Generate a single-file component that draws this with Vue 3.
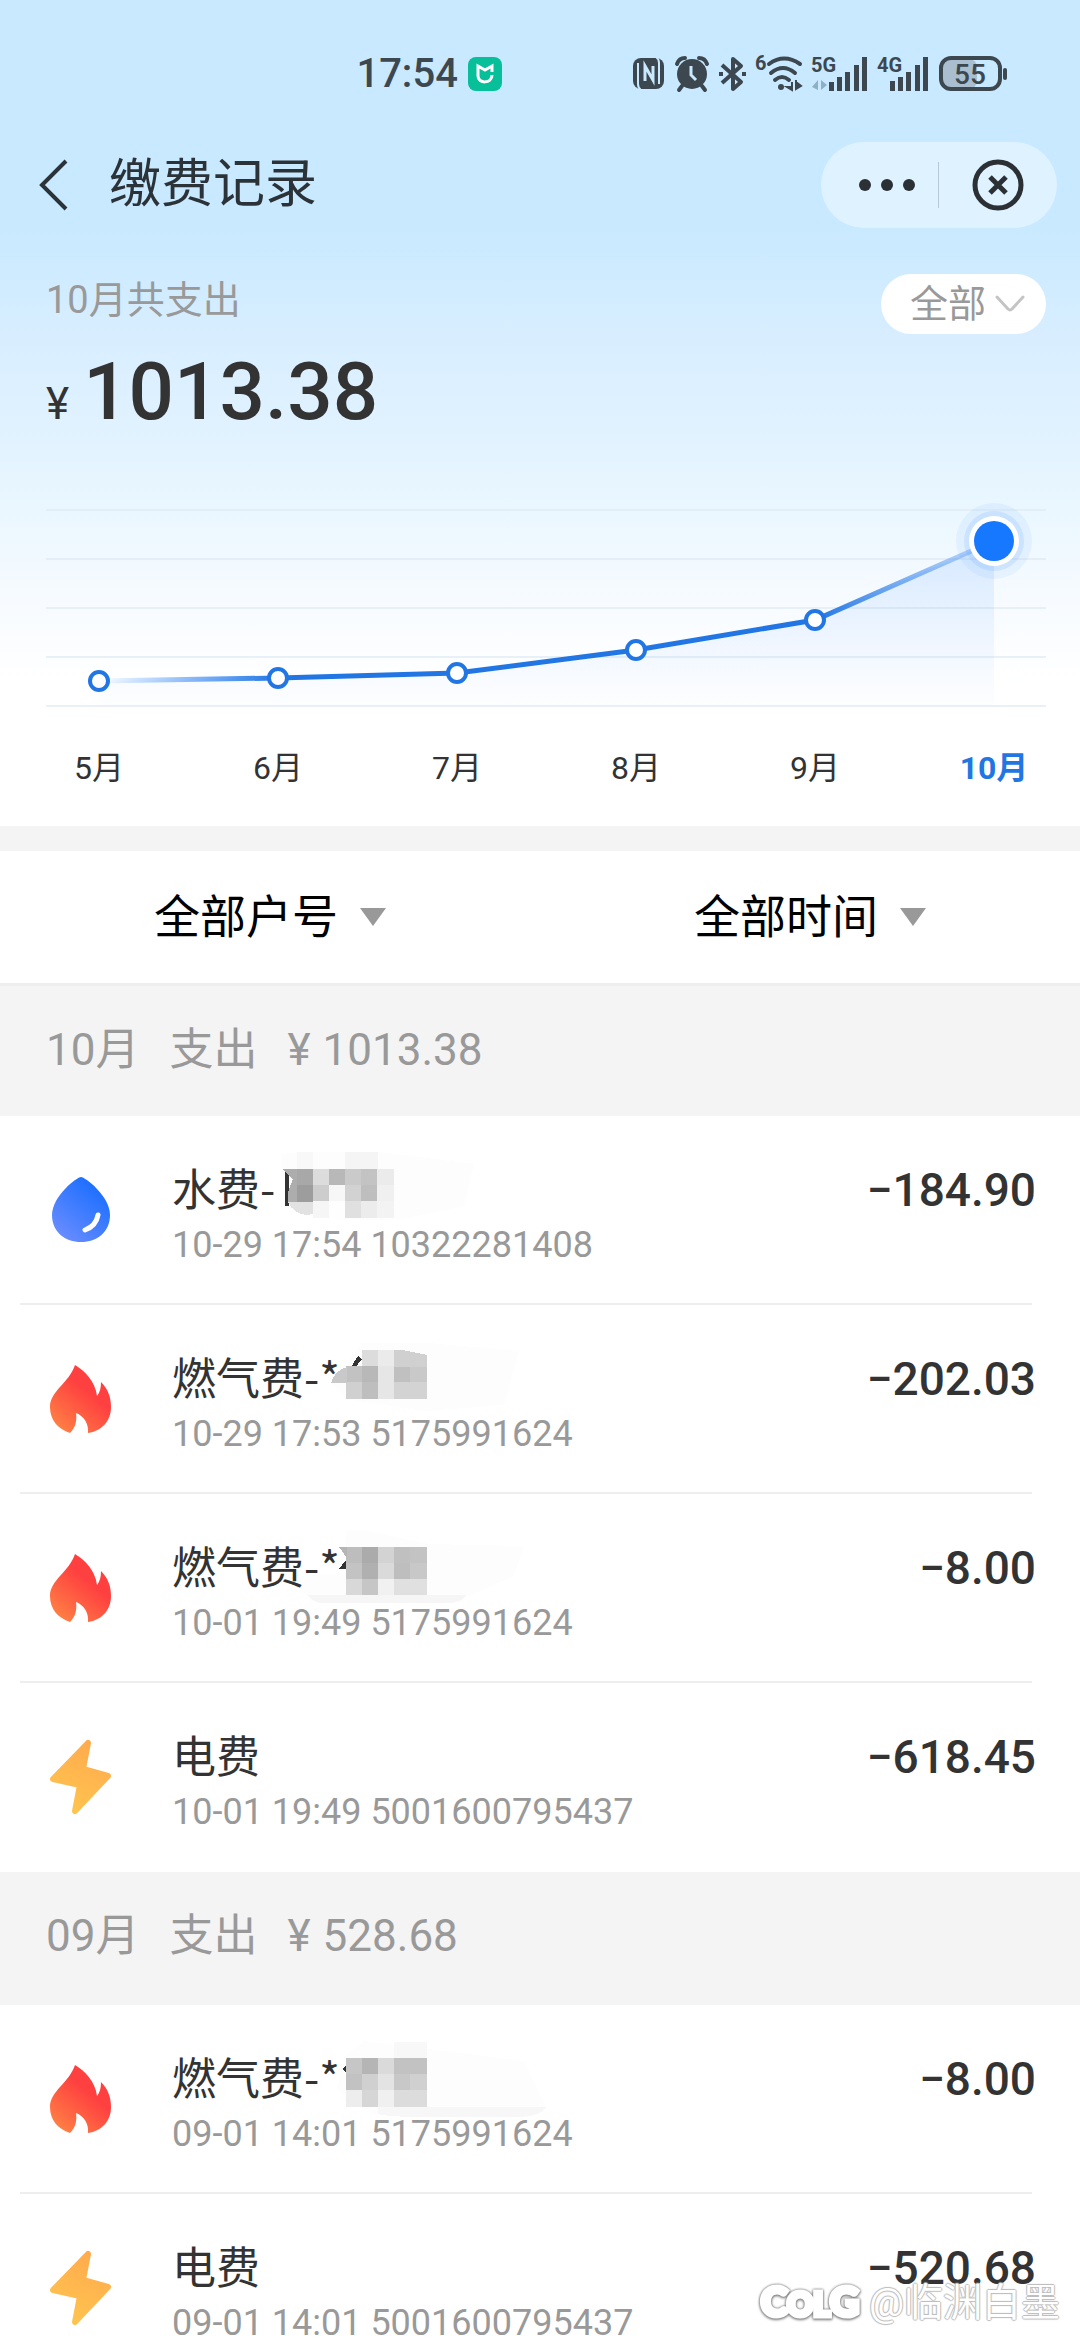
<script setup>
const points = [
  { label: '5月', x: 99, y: 201 },
  { label: '6月', x: 278, y: 198 },
  { label: '7月', x: 457, y: 193 },
  { label: '8月', x: 636, y: 170 },
  { label: '9月', x: 815, y: 140 },
  { label: '10月', x: 994, y: 61 }
]
const gridLines = [30, 79, 128, 177, 226]
const line = points.map((p) => `${p.x},${p.y}`).join(' ')
const area = `${line} 994,226 99,226`

// Each strip of a mask: top, left and the shades of its square cells.
const masks = {
  water: {
    back: 'M107 38L125 36H205L300 48L290 90L225 104H172L130 98L108 60Z',
    glyph: 'M111 54h4v36h-4z',
    strips: [
      { y: 36, x: 123, c: ['#f8f8f8', '#fdfdfd', '#fdfdfd', '#f5f5f5', '#f5f5f5'] },
      { y: 53, x: 123, c: ['#a8a8a8', '#dcdcdc', '#b8b8b8', '#cacaca', '#c3c3c3', '#ebebeb'] },
      { y: 69, x: 123, c: ['#9d9d9d', '#cdcdcd', '#f7f7f7', '#d2d2d2', '#bebebe', '#f0f0f0'] },
      { y: 85, x: 139, c: ['#f6f6f6', '#fefefe', '#e0e0e0', '#ececec', '#f3f3f3'] }
    ],
    edges: [
      { d: 'M108 53H123V86H114V76L119 63Z', f: '#adadad' },
      { d: 'M114 86H139V98Q122 102 114 86Z', f: '#e2e2e2' }
    ]
  },
  gas1: {
    back: 'M158 78L188 38H254L345 46L330 100L250 106L172 94Z',
    glyph: 'M177 62L184 51L188 54L181 63Z',
    strips: [
      { y: 45, x: 188, c: ['#dcdcdc', '#ebebeb'] },
      { y: 61, x: 172, c: ['#c2c2c2', '#b8b8b8', '#e6e6e6', '#c0c0c0', '#c9c9c9'] },
      { y: 77, x: 172, c: ['#d0d0d0', '#bebebe', '#e6e6e6', '#d3d3d3', '#d3d3d3'] }
    ],
    edges: [
      { d: 'M220 45H228L253 50V62H220Z', f: '#d0d0d0' },
      { d: 'M157 78Q160 66 173 62V78Z', f: '#c9c9c9' }
    ]
  },
  gas2: {
    back: 'M129 92Q130 80 145 80H172V36H190L254 50L350 52L340 82L292 103Q290 109 272 109H145Q130 106 129 92Z',
    glyph: 'M165 75L172 66V75Z',
    strips: [
      { y: 53, x: 172, c: ['#bdbdbd', '#ababab', '#d3d3d3', '#c0c0c0', '#c3c3c3'] },
      { y: 69, x: 172, c: ['#c3c3c3', '#b0b0b0', '#dadada', '#bebebe', '#c8c8c8'] },
      { y: 85, x: 172, c: ['#d8d8d8', '#c6c6c6', '#f1f1f1', '#e0e0e0', '#e0e0e0'] }
    ],
    edges: [
      { d: 'M165 53H173V64Z', f: '#b5b5b5' },
      { d: 'M133 101H292Q288 109 272 109H147Q138 107 133 101Z', f: '#f6f6f6' }
    ]
  },
  gas3: {
    back: 'M163 82L172 50L190 36L254 44L350 56L372 102Q368 112 345 112H240L204 110L172 98Z',
    glyph: 'M168 64L172 60V68Z',
    strips: [
      { y: 37, x: 220, c: ['#f8f8f8', '#f8f8f8'] },
      { y: 53, x: 172, c: ['#c6c6c6', '#b5b5b5', '#dadada', '#c2c2c2', '#c2c2c2'] },
      { y: 69, x: 172, c: ['#c2c2c2', '#d0d0d0', '#e3e3e3', '#c8c8c8', '#d0d0d0'] },
      { y: 85, x: 172, c: ['#ededed', '#d6d6d6', '#f0f0f0', '#dcdcdc', '#dcdcdc'] }
    ],
    edges: [{ d: 'M204 102H372Q366 112 340 112H250Q215 112 204 109Z', f: '#f7f7f7' }]
  }
}

const groups = [
  {
    month: '10月',
    total: '1013.38',
    rows: [
      { icon: 'water', title: '水费-', time: '10-29 17:54', no: '10322281408', amount: '184.90', mask: 'water' },
      { icon: 'gas', title: '燃气费-*', time: '10-29 17:53', no: '5175991624', amount: '202.03', mask: 'gas1' },
      { icon: 'gas', title: '燃气费-*', time: '10-01 19:49', no: '5175991624', amount: '8.00', mask: 'gas2' },
      { icon: 'power', title: '电费', time: '10-01 19:49', no: '5001600795437', amount: '618.45' }
    ]
  },
  {
    month: '09月',
    total: '528.68',
    rows: [
      { icon: 'gas', title: '燃气费-*', time: '09-01 14:01', no: '5175991624', amount: '8.00', mask: 'gas3' },
      { icon: 'power', title: '电费', time: '09-01 14:01', no: '5001600795437', amount: '520.68' }
    ]
  }
]
</script>

<template>
  <div class="screen">
    <div class="scroll">
      <header class="hero">
        <div class="status">
          <span class="clock">17:54</span>
          <svg class="mi" width="34" height="34" viewBox="0 0 34 34">
            <rect width="34" height="34" rx="8" fill="#07bf98" />
            <path d="M10 19V9l7 4 7-4v6M24 18c0 9-14 9-14 1" fill="none" stroke="#fff" stroke-width="3" />
          </svg>
          <div class="tray">
            <svg width="32" height="36" viewBox="0 0 32 36">
              <rect x="0" y="2" width="31" height="31" rx="8" fill="#3c474f" />
              <path d="M8 34q-3-2-3-6V7M23 1q3 2 3 6v21" fill="none" stroke="#c9e9ff" stroke-width="2" />
              <path d="M12 25V10l8 14V10" fill="none" stroke="#c9e9ff" stroke-width="3" />
            </svg>
            <svg width="34" height="36" viewBox="0 0 34 36" fill="none" stroke="#3c474f">
              <circle cx="17" cy="18" r="15" fill="#3c474f" stroke="none" />
              <path d="M2 8q2-6 8-6M32 8q-2-6-8-6M7 30l-3 4M27 30l3 4" stroke-width="4" stroke-linecap="round" />
              <path d="M16 10v9l5 5" stroke="#c9e9ff" stroke-width="3" />
            </svg>
            <svg width="27" height="36" viewBox="0 0 27 36" fill="none" stroke="#3c474f" stroke-width="4">
              <path d="M3 9l19 17-8 7V3l8 7L3 27" stroke-linejoin="round" />
              <path d="M0 18h4M23 18h4" />
            </svg>
            <svg width="46" height="36" viewBox="0 0 46 36" fill="none" stroke="#3c474f" stroke-width="4">
              <text x="-1" y="14" class="tag">6</text>
              <path d="M13 8q15-11 31 0M15 17q12-10 24 0M19 24q7-6 14 0" stroke-linecap="round" />
              <circle cx="25" cy="31" r="3" fill="#3c474f" stroke="none" />
              <path d="M36 26v8l-5-3h5M40 24v10M40 26l5 4-5 3z" stroke-width="2" fill="#3c474f" />
            </svg>
            <svg width="56" height="36" viewBox="0 0 56 36" fill="#3c474f">
              <text x="-1" y="16" class="tag">5G</text>
              <path d="M6 24v10L0 31zM9 24l6 5-6 5z" fill="#8fb0c4" />
              <path d="M17 26h5v9h-5zM25 21h5v14h-5zM33 16h5v19h-5zM42 9h5v26h-5zM50 1h5v34h-5z" />
            </svg>
            <svg width="51" height="36" viewBox="0 0 51 36" fill="#3c474f">
              <text x="-1" y="16" class="tag">4G</text>
              <path d="M12 25h5v10h-5zM20 21h5v14h-5zM28 16h5v19h-5zM37 9h5v26h-5zM45 1h5v34h-5z" />
            </svg>
            <svg width="69" height="36" viewBox="0 0 69 36" fill="#3c474f">
              <rect x="2" y="3" width="36" height="30" rx="8" fill="#a9bfd0" />
              <rect x="2" y="2" width="59" height="31" rx="10" fill="none" stroke="#3c474f" stroke-width="4" />
              <rect x="64" y="12" width="4" height="12" rx="2" />
              <text x="31" y="28" text-anchor="middle" class="level">55</text>
            </svg>
          </div>
        </div>

        <nav class="nav">
          <button class="back" aria-label="返回">
            <svg width="30" height="52" viewBox="0 0 30 52">
              <path d="M28 2L4 26l24 24" fill="none" stroke="#2b3338" stroke-width="4" />
            </svg>
          </button>
          <h1>缴费记录</h1>
          <div class="capsule">
            <button class="more" aria-label="更多">
              <svg width="56" height="12" viewBox="0 0 56 12" fill="#2b3034">
                <circle cx="6" cy="6" r="6" /><circle cx="28" cy="6" r="6" /><circle cx="50" cy="6" r="6" />
              </svg>
            </button>
            <i class="split"></i>
            <button aria-label="关闭">
              <svg width="52" height="52" viewBox="0 0 52 52" fill="none" stroke="#2b3034" stroke-width="5">
                <circle cx="26" cy="26" r="23" />
                <path d="M18 18l16 16M34 18L18 34" />
              </svg>
            </button>
          </div>
        </nav>

        <section class="summary">
          <div>
            <p class="caption">10月共支出</p>
            <p class="total"><span class="yen">¥</span><span>1013.38</span></p>
          </div>
          <div class="pill">
            <select aria-label="类型"><option>全部</option></select>
            <svg width="30" height="18" viewBox="0 0 30 18">
              <path d="M2 2l11 12q2 2 4 0L28 2" fill="none" stroke="#c4c4c4" stroke-width="3" stroke-linecap="round" />
            </svg>
          </div>
        </section>

        <svg class="chart" viewBox="0 0 1080 346">
          <defs>
            <linearGradient id="stroke" x1="99" x2="994" y1="0" y2="0" gradientUnits="userSpaceOnUse">
              <stop offset="0" stop-color="#1677ff" stop-opacity="0" />
              <stop offset="0.2" stop-color="#2276e3" />
              <stop offset="0.8" stop-color="#2276e3" />
              <stop offset="1" stop-color="#5a9bf5" stop-opacity="0.3" />
            </linearGradient>
            <linearGradient id="fill" x1="0" x2="0" y1="61" y2="226" gradientUnits="userSpaceOnUse">
              <stop offset="0" stop-color="#1677ff" stop-opacity="0.12" />
              <stop offset="1" stop-color="#1677ff" stop-opacity="0.01" />
            </linearGradient>
          </defs>
          <path v-for="y in gridLines" :key="y" :d="`M46 ${y}H1046`" stroke="#dfe9f4" stroke-width="2" stroke-opacity="0.7" />
          <polygon :points="area" fill="url(#fill)" />
          <polyline :points="line" fill="none" stroke="url(#stroke)" stroke-width="5" />
          <circle
            v-for="p in points.slice(0, 5)"
            :key="p.label"
            :cx="p.x"
            :cy="p.y"
            r="9"
            fill="#fff"
            stroke="#2276e3"
            stroke-width="4"
          />
          <circle cx="994" cy="61" r="38" fill="#1677ff" fill-opacity="0.06" />
          <circle cx="994" cy="61" r="30" fill="#1677ff" fill-opacity="0.1" />
          <circle cx="994" cy="61" r="25" fill="#fff" />
          <circle cx="994" cy="61" r="20" fill="#1677ff" />
          <text
            v-for="(p, i) in points"
            :key="p.label"
            :x="p.x"
            y="299"
            text-anchor="middle"
            class="month"
            :class="{ current: i === 5 }"
          >{{ p.label }}</text>
        </svg>
      </header>

      <div class="filters">
        <label class="filter">
          <select aria-label="户号"><option>全部户号</option></select>
          <i class="caret"></i>
        </label>
        <label class="filter">
          <select aria-label="时间"><option>全部时间</option></select>
          <i class="caret"></i>
        </label>
      </div>

      <section v-for="(g, gi) in groups" :key="g.month">
        <h2 class="group" :class="{ first: gi === 0 }">
          <span>{{ g.month }}</span>
          <span>支出</span>
          <span class="sum"><span>¥</span><span>{{ g.total }}</span></span>
        </h2>
        <ul>
          <li v-for="(r, i) in g.rows" :key="i" class="row">
            <svg v-if="r.icon === 'water'" class="icon" viewBox="0 0 66 76">
              <defs>
                <linearGradient id="w" x1="0.8" y1="0.2" x2="0.2" y2="1">
                  <stop offset="0" stop-color="#1f70ff" /><stop offset="1" stop-color="#6b8dff" />
                </linearGradient>
              </defs>
              <path d="M33 5C37 5 62 24 62 43C62 60 49 70 33 70C17 70 4 60 4 43C4 24 29 5 33 5Z" fill="url(#w)" />
              <path d="M50 43q-2 11-13 15" fill="none" stroke="#fff" stroke-width="5" stroke-linecap="round" />
            </svg>
            <svg v-else-if="r.icon === 'gas'" class="icon" viewBox="0 0 66 76">
              <defs>
                <linearGradient id="f" x1="0.7" y1="0.2" x2="0.1" y2="1">
                  <stop offset="0.2" stop-color="#ff4040" /><stop offset="1" stop-color="#ff8645" />
                </linearGradient>
              </defs>
              <path d="M27 4C37 10 47 20 49 35C52 31 53 27 53 21C60 28 63 36 63 46C63 60 54 70 40 72C41 63 36 55 28 52C29 59 28 66 22 72C10 68 2 59 2 46C2 30 21 22 27 4Z" fill="url(#f)" />
            </svg>
            <svg v-else class="icon" viewBox="0 0 66 76">
              <defs>
                <linearGradient id="b" x1="0.7" y1="0" x2="0.3" y2="1">
                  <stop offset="0" stop-color="#ffab4d" /><stop offset="1" stop-color="#ffc44f" />
                </linearGradient>
              </defs>
              <path d="M40 4L35 30L60 37L27 72L32 46L5 40Z" fill="url(#b)" stroke="url(#b)" stroke-width="6" stroke-linejoin="round" />
            </svg>
            <div class="info">
              <p class="title">{{ r.title }}</p>
              <svg v-if="r.mask" class="mask" viewBox="0 0 420 189" shape-rendering="crispEdges">
                <path :d="masks[r.mask].back" fill="#fdfdfd" />
                <path :d="masks[r.mask].glyph" fill="#333" />
                <g v-for="s in masks[r.mask].strips" :key="s.y">
                  <rect v-for="(c, k) in s.c" :key="k" :x="s.x + k * 16" :y="s.y" width="17" height="17" :fill="c" />
                </g>
                <path v-for="e in masks[r.mask].edges" :key="e.d" :d="e.d" :fill="e.f" />
              </svg>
              <p class="meta">{{ r.time }} {{ r.no }}</p>
            </div>
            <p class="amount">−{{ r.amount }}</p>
          </li>
        </ul>
      </section>
    </div>

    <div class="watermark">
      <span class="logo">C<small>OL</small>G</span>
      <span class="user">@临渊白墨</span>
    </div>
  </div>
</template>

<style>
body {
  margin: 0;
}
</style>

<style scoped>
.screen {
  position: relative;
  height: 100vh;
  overflow: hidden;
  background: #fff;
  color: #333;
  font-family: Roboto, "Noto Sans CJK SC", sans-serif;
}
.scroll {
  height: 100%;
  overflow-y: auto;
  scrollbar-width: none;
}
p, h1, h2, ul {
  margin: 0;
  padding: 0;
  font-weight: 400;
}
svg {
  display: block;
  flex: none;
  overflow: visible;
}
button, select {
  margin: 0;
  padding: 0;
  border: 0;
  background: none;
  font-family: inherit;
  appearance: none;
}
.hero {
  background: linear-gradient(#c8e9ff 0, #c8e9ff 220px, #d8eeff 340px, #e3f3ff 450px, #eaf7ff 510px, #f7fbff 600px, #fff 680px);
}
.status {
  display: flex;
  align-items: center;
  height: 44px;
  padding: 52px 72px 0 33%;
}
.clock {
  color: #3c474f;
  font-size: 40px;
  font-weight: 500;
  line-height: 44px;
}
.mi {
  margin-left: 10px;
}
.tray {
  display: flex;
  gap: 10px;
  margin-left: auto;
}
.tag {
  fill: #3c474f;
  stroke: none;
  font-size: 20px;
  font-weight: 700;
}
.level {
  font-size: 28px;
  font-weight: 500;
}
.nav {
  display: flex;
  align-items: center;
  height: 86px;
  margin-top: 46px;
  padding: 0 23px 0 38px;
}
h1 {
  margin-left: 41px;
  color: #2b3338;
  font-size: 52px;
  line-height: 76px;
}
.capsule {
  display: flex;
  align-items: center;
  width: 236px;
  height: 86px;
  margin-left: auto;
  border-radius: 43px;
  background: rgba(255, 255, 255, 0.42);
}
.capsule button {
  display: flex;
  flex: none;
  box-sizing: border-box;
  width: 117px;
  justify-content: center;
}
.capsule .more {
  padding-left: 14px;
}
.split {
  width: 1px;
  height: 46px;
  background: #b9c8d4;
}
.back {
  display: flex;
}
.summary {
  display: flex;
  align-items: flex-start;
  justify-content: space-between;
  height: 206px;
  padding: 46px 34px 0 46px;
}
.caption {
  padding-top: 2px;
  color: #999;
  font-size: 38px;
  line-height: 48px;
}
.total {
  display: flex;
  align-items: baseline;
  gap: 14px;
  margin-top: 20px;
  font-size: 80px;
  font-weight: 500;
  line-height: 96px;
}
.yen {
  font-size: 44px;
  font-weight: 400;
}
.pill {
  display: flex;
  align-items: center;
  gap: 8px;
  box-sizing: border-box;
  height: 60px;
  padding: 0 21px 0 29px;
  border-radius: 30px;
  background: #fff;
}
.pill select {
  color: #999;
  font-size: 38px;
  line-height: 56px;
}
.chart {
  width: 100%;
  height: auto;
}
.month {
  fill: #333;
  font-size: 32px;
}
.current {
  fill: #2276e3;
  font-weight: 700;
}
.filters {
  display: flex;
  height: 132px;
  border-top: 25px solid #f4f4f4;
}
.filter {
  display: flex;
  flex: 1;
  align-items: center;
  justify-content: center;
  gap: 22px;
}
.filter select {
  color: #000;
  font-size: 46px;
  line-height: 64px;
}
.caret {
  border: 13px solid transparent;
  border-top: 18px solid #999;
  border-bottom: 0;
}
.group {
  display: flex;
  align-items: baseline;
  gap: 30px;
  box-sizing: border-box;
  height: 133px;
  padding-left: 46px;
  background: #f4f4f4;
  color: #999;
  font-size: 44px;
  line-height: 128px;
}
.first {
  border-top: 3px solid #eee;
}
.sum {
  display: flex;
  gap: 12px;
}
ul {
  list-style: none;
}
.row {
  display: flex;
  align-items: center;
  box-sizing: border-box;
  height: 189px;
  margin: 0 48px 0 20px;
  border-bottom: 2px solid #eee;
}
.row:last-child {
  border-bottom-color: transparent;
}
.icon {
  width: 66px;
  height: 76px;
  margin-left: 28px;
}
.info {
  position: relative;
  flex: 1;
  align-self: stretch;
  margin-left: 58px;
  padding-top: 41px;
}
.title {
  font-family: "Noto Sans CJK SC", sans-serif;
  font-size: 44px;
  line-height: 60px;
}
.meta {
  position: relative;
  color: #999;
  font-size: 36px;
  line-height: 56px;
}
.mask {
  position: absolute;
  top: 0;
  left: 2px;
  width: 420px;
  height: 189px;
}
.amount {
  align-self: flex-start;
  margin: 44px -4px 0 0;
  font-size: 46px;
  font-weight: 500;
  line-height: 60px;
}
.watermark {
  position: absolute;
  right: 20px;
  bottom: 12px;
  display: flex;
  align-items: center;
  gap: 10px;
  color: #fff;
}
.logo {
  font-family: Lato, sans-serif;
  font-size: 40px;
  font-weight: 900;
  line-height: 56px;
  -webkit-text-stroke: 5px #fff;
  filter: drop-shadow(0 0 1px #777) drop-shadow(0 1px 1px #888);
}
.logo small {
  font-size: 32px;
}
.user {
  font-size: 39px;
  line-height: 56px;
  text-shadow: 1px 0 1px #bbb, -1px 0 1px #bbb, 0 1px 1px #bbb, 0 -1px 1px #bbb;
}
</style>
